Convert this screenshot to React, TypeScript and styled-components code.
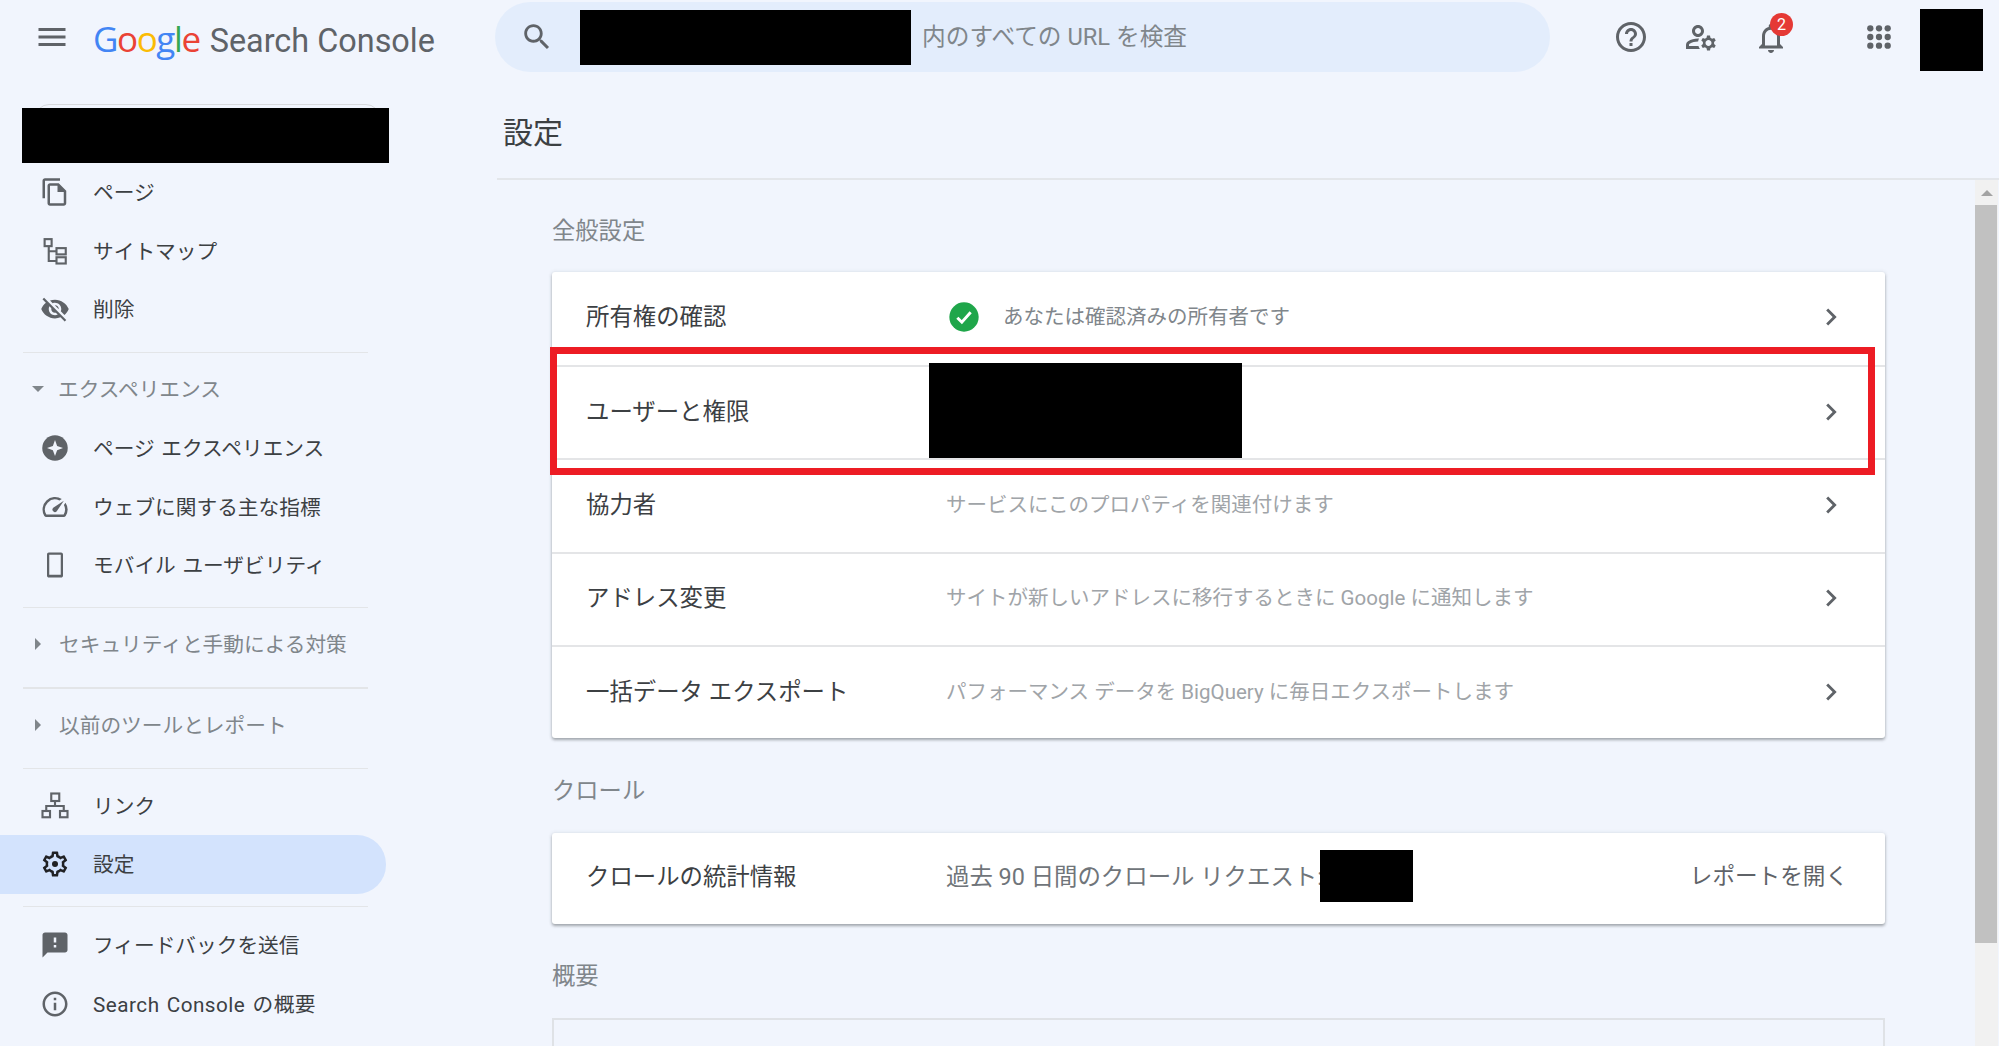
import React from 'react';
import styled, { createGlobalStyle } from 'styled-components';

const Global = createGlobalStyle`
  html, body { margin: 0; padding: 0; height: 100%; overflow: hidden; background: #f1f5fd; }
  body { font-family: Roboto, "Noto Sans CJK JP", sans-serif; color: #3c4043; }
  * { box-sizing: border-box; }
`;

const Page = styled.div`
  width: 1999px; height: 1046px; overflow: hidden; display: flex; flex-direction: column; background: #f1f5fd;
`;
const Header = styled.header`
  height: 76px; flex: none; display: flex; align-items: flex-start; padding-left: 34px;
`;
const MenuButton = styled.div`
  width: 36px; height: 36px; margin-top: 19px; color: #5f6368;
`;
const Logo = styled.div`
  width: 402px; margin-left: 23px; margin-top: 18px; display: flex; align-items: baseline; gap: 10px; font-size: 32.4px; line-height: 42px; white-space: nowrap; color: #5f6368;
`;
const GoogleWord = styled.span`
  font-family: "Open Sans", sans-serif; font-size: 35px; letter-spacing: -1.4px;
`;
const Letter = styled.span<{ $c: string }>`
  color: ${p => p.$c};
`;
const SearchBar = styled.div`
  width: 1055px; height: 70px; margin-top: 2px; border-radius: 35px; background: #e3edfc; display: flex; align-items: center; padding-left: 25px; color: #5f6368;
`;
const SearchText = styled.span`
  font-size: 23.7px; color: #80868b; margin-left: 11px; margin-bottom: 5px; white-space: nowrap;
`;
const SearchMask = styled.div`
  width: 331px; height: 55px; background: #000; margin-left: 26px;
`;
const Tools = styled.div`
  flex: 1; display: flex; align-items: flex-start; color: #5f6368;
`;
const ToolIcon = styled.div<{ $ml: number; $top?: number }>`
  position: relative; width: 36px; height: 36px; margin-left: ${p => p.$ml}px; margin-top: ${p => p.$top ?? 19}px;
`;
const Badge = styled.span`
  position: absolute; left: 17px; top: -7px; width: 23px; height: 23px; border-radius: 50%; background: #e53935; color: #fff; font-size: 16px; line-height: 23px; text-align: center;
`;
const Avatar = styled.div`
  width: 63px; height: 62px; background: #000; margin-left: 23px; margin-top: 9px;
`;
const Body = styled.div`
  flex: 1; min-height: 0; display: flex;
`;
const Sidebar = styled.nav`
  width: 497px; flex: none; padding-top: 28px;
`;
const PropertyWrap = styled.div`
  position: relative; height: 59px;
`;
const PropertyOutline = styled.div`
  position: absolute; left: 35px; top: 0; width: 345px; height: 40px; border: 1px solid #d8dadd; border-radius: 14px;
`;
const PropertyMask = styled.div`
  position: absolute; left: 22px; top: 4px; width: 367px; height: 55px; background: #000;
`;
const NavRow = styled.div<{ $active?: boolean; $wide?: boolean }>`
  width: 386px; height: 58.5px; display: flex; align-items: center; padding-left: 40px; gap: 23px; font-size: 20.7px; word-spacing: 1.5px; white-space: nowrap;
  letter-spacing: ${p => (p.$wide ? '.5px' : '0')};
  color: ${p => (p.$active ? '#202124' : '#5f6368')};
  border-radius: 0 29px 29px 0;
  background: ${p => (p.$active ? '#d3e3fd' : 'transparent')};
`;
const NavText = styled.span`
  color: #3c4043;
  position: relative; top: -1px;
`;
const Divider = styled.div<{ $top: number; $bottom: number }>`
  width: 345px; height: 1.5px; margin: ${p => p.$top}px 0 ${p => p.$bottom}px 23px; background: #e3e5e8;
`;
const Group = styled.div<{ $after?: number }>`
  height: 58px; margin: 6px 0 ${p => p.$after ?? 0}px; display: flex; align-items: center; padding-left: 30px; gap: 11px; font-size: 20.7px; color: #80868b; white-space: nowrap;
`;
const Caret = styled.span<{ $open?: boolean }>`
  width: 0; height: 0; flex: none;
  ${p => p.$open
    ? 'border-left: 6px solid transparent; border-right: 6px solid transparent; border-top: 6px solid #80868b; margin: 2px 3px 0 2px;'
    : 'border-top: 6px solid transparent; border-bottom: 6px solid transparent; border-left: 6px solid #80868b; margin: 2px 7px 0 5px;'}
`;
const Main = styled.main`
  flex: 1; min-width: 0; display: flex; flex-direction: column;
`;
const TitleBar = styled.div`
  height: 105px; flex: none; margin-top: -1px; padding: 36px 0 0 6px; border-bottom: 2px solid #e3e6ea; font-size: 30px; line-height: 44px; color: #3c4043;
`;
const ContentRow = styled.div`
  flex: 1; min-height: 0; display: flex;
`;
const Content = styled.div`
  width: 1478px; flex: none; overflow: hidden; padding: 0 90px 0 55px;
`;
const SectionTitle = styled.div<{ $top?: number; $bottom?: number }>`
  height: 30px; line-height: 30px; margin: ${p => p.$top ?? 36}px 0 ${p => p.$bottom ?? 27}px; font-size: 23.3px; color: #80868b;
`;
const Card = styled.div`
  position: relative; background: #fff; border-radius: 3px; box-shadow: 0 2px 3px rgba(60,64,67,.4), 0 0 4px rgba(60,64,67,.12);
`;
const Row = styled.div<{ $h?: number }>`
  position: relative; height: ${p => p.$h ?? 93.4}px; display: flex; align-items: center; padding: 0 40px 0 34px;
  & + & { border-top: 2px solid #e4e5e7; }
`;
const Label = styled.div`
  width: 360px; flex: none; margin-bottom: 6px; font-size: 23.4px; color: #3c4043; white-space: nowrap;
`;
const Desc = styled.div`
  flex: 1; margin-bottom: 6px; font-size: 20.5px; color: #a0a4a8; white-space: nowrap;
`;
const OwnerDesc = styled(Desc)`
  display: flex; align-items: center; gap: 23px; color: #80868b; margin-left: 2px; margin-bottom: 2px;
`;
const OwnerText = styled.span`
  margin-bottom: 4px;
`;
const CrawlDesc = styled(Desc)`
  display: flex; align-items: center; font-size: 23.4px; color: #70757a; margin-bottom: 7px;
`;
const CrawlMask = styled.div`
  width: 93px; height: 52px; background: #000; margin-left: -3px; margin-top: 2px;
`;
const Chevron = styled.div`
  width: 34px; height: 34px; margin-right: -3px; margin-bottom: 2px; color: #5f6368;
`;
const ReportLink = styled.div`
  font-size: 22.6px; color: #5f6368; white-space: nowrap; margin-right: -3px; margin-bottom: 7px;
`;
const UserMask = styled.div`
  position: absolute; left: 377px; top: -4px; width: 313px; height: 95px; background: #000;
`;
const Highlight = styled.div`
  position: absolute; left: -2px; top: 75px; right: 10px; height: 128px; border: 7px solid #ed1c24; pointer-events: none;
`;
const EmptyCard = styled.div`
  height: 200px; border: 2px solid #dfe2e6; background: #f1f5fd;
`;
const Scrollbar = styled.div`
  width: 23px; flex: none; background: #f1f1f1; display: flex; flex-direction: column;
`;
const ScrollArrow = styled.div`
  height: 25px; display: flex; align-items: center; justify-content: center;
  &::before { content: ''; border-left: 6px solid transparent; border-right: 6px solid transparent; border-bottom: 6px solid #a3a3a3; }
`;
const ScrollThumb = styled.div`
  height: 738px; width: 22px; background: #c1c1c1;
`;
const Svg = styled.svg<{ $size: number }>`
  width: ${p => p.$size}px; height: ${p => p.$size}px; flex: none; display: block; fill: currentColor;
`;

const Icon: React.FC<{ d?: string; size?: number; children?: React.ReactNode }> = ({ d, size = 30, children }) => (
  <Svg $size={size} viewBox="0 0 24 24">{d && <path d={d} />}{children}</Svg>
);

const P = {
  menu: 'M3 18h18v-2H3v2zm0-5h18v-2H3v2zm0-7v2h18V6H3z',
  search: 'M15.5 14h-.79l-.28-.27C15.41 12.59 16 11.11 16 9.5 16 5.91 13.09 3 9.5 3S3 5.91 3 9.5 5.91 16 9.5 16c1.61 0 3.09-.59 4.23-1.57l.27.28v.79l5 4.99L20.49 19l-4.99-5zm-6 0C7.01 14 5 11.99 5 9.5S7.01 5 9.5 5 14 7.01 14 9.5 11.99 14 9.5 14z',
  help: 'M11 18h2v-2h-2v2zm1-16C6.48 2 2 6.48 2 12s4.48 10 10 10 10-4.48 10-10S17.52 2 12 2zm0 18c-4.41 0-8-3.59-8-8s3.59-8 8-8 8 3.59 8 8-3.59 8-8 8zm0-14c-2.21 0-4 1.79-4 4h2c0-1.1.9-2 2-2s2 .9 2 2c0 2-3 1.75-3 5h2c0-2.25 3-2.5 3-5 0-2.21-1.79-4-4-4z',
  manage: 'M4 18v-.65c0-.34.16-.66.41-.81C6.1 15.53 8.03 15 10 15c.03 0 .05 0 .08.01.1-.7.3-1.37.59-1.98-.22-.02-.44-.03-.67-.03-2.42 0-4.68.67-6.61 1.82-.88.52-1.39 1.5-1.39 2.53V20h9.26c-.42-.6-.75-1.28-.97-2H4zm6-6c2.21 0 4-1.79 4-4s-1.79-4-4-4-4 1.79-4 4 1.79 4 4 4zm0-6c1.1 0 2 .9 2 2s-.9 2-2 2-2-.9-2-2 .9-2 2-2zm10.75 10c0-.22-.03-.42-.06-.63l1.14-1.01-1-1.73-1.45.49c-.32-.27-.68-.48-1.08-.63L18 11h-2l-.3 1.49c-.4.15-.76.36-1.08.63l-1.45-.49-1 1.73 1.14 1.01c-.03.21-.06.41-.06.63s.03.42.06.63l-1.14 1.01 1 1.73 1.45-.49c.32.27.68.48 1.08.63L16 21h2l.3-1.49c.4-.15.76-.36 1.08-.63l1.45.49 1-1.73-1.14-1.01c.03-.21.06-.41.06-.63zM17 18c-1.1 0-2-.9-2-2s.9-2 2-2 2 .9 2 2-.9 2-2 2z',
  bell: 'M12 22c1.1 0 2-.9 2-2h-4c0 1.1.9 2 2 2zm6-6v-5c0-3.07-1.63-5.64-4.5-6.32V4c0-.83-.67-1.5-1.5-1.5s-1.5.67-1.5 1.5v.68C7.64 5.36 6 7.92 6 11v5l-2 2v1h16v-1l-2-2zm-2 1H8v-6c0-2.48 1.51-4.5 4-4.5s4 2.02 4 4.5v6z',
  copy: 'M16 1H4c-1.1 0-2 .9-2 2v14h2V3h12V1zm-1 4H8c-1.1 0-1.99.9-1.99 2L6 21c0 1.1.89 2 1.99 2H19c1.1 0 2-.9 2-2V11l-6-6zM8 21V7h6v5h5v9H8z',
  eyeOff: 'M12 7c2.76 0 5 2.24 5 5 0 .65-.13 1.26-.36 1.83l2.92 2.92c1.51-1.26 2.7-2.89 3.43-4.75-1.73-4.39-6-7.5-11-7.5-1.4 0-2.74.25-3.98.7l2.16 2.16C10.74 7.13 11.35 7 12 7zM2 4.27l2.28 2.28.46.46C3.08 8.3 1.78 10.02 1 12c1.73 4.39 6 7.5 11 7.5 1.55 0 3.03-.3 4.38-.84l.42.42L19.73 22 21 20.73 3.27 3 2 4.27zM7.53 9.8l1.55 1.55c-.05.21-.08.43-.08.65 0 1.66 1.34 3 3 3 .22 0 .44-.03.65-.08l1.55 1.55c-.67.33-1.41.53-2.2.53-2.76 0-5-2.24-5-5 0-.79.2-1.53.53-2.2zm4.31-.78l3.15 3.15.02-.16c0-1.66-1.34-3-3-3l-.17.01z',
  speed: 'M20.38 8.57l-1.23 1.85a8 8 0 0 1-.22 7.58H5.07A8 8 0 0 1 15.58 6.85l1.85-1.23A10 10 0 0 0 3.35 19a2 2 0 0 0 1.72 1h13.85a2 2 0 0 0 1.74-1 10 10 0 0 0-.27-10.44zM10.59 15.41a2 2 0 0 0 2.83 0l5.66-8.49-8.49 5.66a2 2 0 0 0 0 2.83z',
  phone: 'M16.9 2H7.1C6.2 2 5.6 2.7 5.6 3.5v17c0 .9.7 1.5 1.5 1.5h9.8c.8 0 1.5-.7 1.5-1.5v-17c0-.8-.7-1.5-1.500-1.500zM16.6 19.8H7.4V3.8h9.2z',
  gear: 'M19.43 12.98c.04-.32.07-.64.07-.98 0-.34-.03-.66-.07-.98l2.11-1.65c.19-.15.24-.42.12-.64l-2-3.46c-.09-.16-.26-.25-.44-.25-.06 0-.12.01-.17.03l-2.49 1c-.52-.4-1.08-.73-1.69-.98l-.38-2.65C14.46 2.18 14.25 2 14 2h-4c-.25 0-.46.18-.49.42l-.38 2.65c-.61.25-1.17.59-1.69.98l-2.49-1c-.06-.02-.12-.03-.18-.03-.17 0-.34.09-.43.25l-2 3.46c-.13.22-.07.49.12.64l2.11 1.65c-.04.32-.07.65-.07.98 0 .33.03.66.07.98l-2.11 1.65c-.19.15-.24.42-.12.64l2 3.46c.09.16.26.25.44.25.06 0 .12-.01.17-.03l2.49-1c.52.4 1.08.73 1.69.98l.38 2.65c.03.24.24.42.49.42h4c.25 0 .46-.18.49-.42l.38-2.65c.61-.25 1.17-.59 1.69-.98l2.49 1c.06.02.12.03.18.03.17 0 .34-.09.43-.25l2-3.46c.12-.22.07-.49-.12-.64l-2.11-1.65zm-1.98-1.71c.04.31.05.52.05.73 0 .21-.02.43-.05.73l-.14 1.13.89.7 1.08.84-.7 1.21-1.27-.51-1.04-.42-.9.68c-.43.32-.84.56-1.25.73l-1.06.43-.16 1.13-.2 1.35h-1.4l-.19-1.35-.16-1.13-1.06-.43c-.43-.18-.83-.41-1.23-.71l-.91-.7-1.06.43-1.27.51-.7-1.21 1.08-.84.89-.7-.14-1.13c-.03-.31-.05-.54-.05-.74s.02-.43.05-.73l.14-1.13-.89-.7-1.08-.84.7-1.21 1.27.51 1.04.42.9-.68c.43-.32.84-.56 1.25-.73l1.06-.43.16-1.13.2-1.35h1.39l.19 1.35.16 1.13 1.06.43c.43.18.83.41 1.23.71l.91.7 1.06-.43 1.27-.51.7 1.21-1.07.85-.89.7.14 1.13z',
  feedback: 'M20 2H4c-1.1 0-1.99.9-1.99 2L2 22l4-4h14c1.1 0 2-.9 2-2V4c0-1.1-.9-2-2-2zm-7 12h-2v-2h2v2zm0-4h-2V6h2v4z',
  info: 'M11 7h2v2h-2zm0 4h2v6h-2zm1-9C6.48 2 2 6.48 2 12s4.48 10 10 10 10-4.48 10-10S17.52 2 12 2zm0 18c-4.41 0-8-3.59-8-8s3.59-8 8-8 8 3.59 8 8-3.59 8-8 8z',
  chevron: 'M10 6L8.59 7.41 13.17 12l-4.58 4.59L10 18l6-6z',
};

const SitemapIcon = () => (
  <Icon>
    <g fill="none" stroke="currentColor" strokeWidth="1.7">
      <rect x="3.7" y="2.5" width="5.6" height="5.6" />
      <rect x="13.2" y="9.7" width="7.4" height="5" />
      <rect x="13.2" y="17" width="7.4" height="5" />
      <path d="M7 8v12h6M7 12.2h6" />
    </g>
  </Icon>
);
const LanIcon = () => (
  <Icon>
    <g fill="none" stroke="currentColor" strokeWidth="1.7">
      <rect x="9" y="2" width="6.4" height="6" />
      <rect x="2" y="16" width="6" height="5" />
      <rect x="16" y="16" width="6" height="5" />
      <path d="M12 8v4M5 16v-4h14v4" />
    </g>
  </Icon>
);
const ExperienceIcon = () => (
  <Icon>
    <circle cx="12" cy="12" r="10.2" />
    <path fill="#f1f5fd" d="M12 5.6l1.7 4.7 4.7 1.7-4.7 1.7-1.7 4.7-1.7-4.7L5.6 12l4.7-1.7z" />
  </Icon>
);
const GearIcon = () => (
  <Icon d={P.gear}><circle cx="12" cy="12" r="2.4" /></Icon>
);
const AppsIcon = () => (
  <Icon size={36}>
    {[6.2, 12, 17.8].flatMap(y => [6.2, 12, 17.8].map(x => <circle key={`${x}-${y}`} cx={x} cy={y} r="2.1" />))}
  </Icon>
);
const CheckIcon = () => (
  <Icon size={32}>
    <circle cx="12" cy="12" r="11" fill="#1fa64a" />
    <path fill="none" stroke="#fff" strokeWidth="2.2" d="M7 12.5l3.4 3.4L17 8.5" />
  </Icon>
);

const NavItem: React.FC<{ icon: React.ReactNode; text: string; active?: boolean; wide?: boolean }> = ({ icon, text, active, wide }) => (
  <NavRow $active={active} $wide={wide}>{icon}<NavText>{text}</NavText></NavRow>
);

const googleLetters: [string, string][] = [['G', '#4285f4'], ['o', '#ea4335'], ['o', '#fbbc05'], ['g', '#4285f4'], ['l', '#34a853'], ['e', '#ea4335']];

const ChevronRight = () => <Chevron><Icon d={P.chevron} size={34} /></Chevron>;

export default function App() {
  return (
    <Page>
      <Global />
      <Header>
        <MenuButton><Icon d={P.menu} size={36} /></MenuButton>
        <Logo>
          <GoogleWord>{googleLetters.map(([l, c], i) => <Letter key={i} $c={c}>{l}</Letter>)}</GoogleWord>
          <span>Search Console</span>
        </Logo>
        <SearchBar>
          <Icon d={P.search} size={34} />
          <SearchMask />
          <SearchText>内のすべての URL を検査</SearchText>
        </SearchBar>
        <Tools>
          <ToolIcon $ml={63}><Icon d={P.help} size={36} /></ToolIcon>
          <ToolIcon $ml={34}><Icon d={P.manage} size={36} /></ToolIcon>
          <ToolIcon $ml={34} $top={20}><Icon d={P.bell} size={36} /><Badge>2</Badge></ToolIcon>
          <ToolIcon $ml={72}><AppsIcon /></ToolIcon>
          <Avatar />
        </Tools>
      </Header>
      <Body>
        <Sidebar>
          <PropertyWrap><PropertyOutline /><PropertyMask /></PropertyWrap>
          <NavItem icon={<Icon d={P.copy} />} text="ページ" />
          <NavItem icon={<SitemapIcon />} text="サイトマップ" />
          <NavItem icon={<Icon d={P.eyeOff} />} text="削除" />
          <Divider $top={13} $bottom={0} />
          <Group $after={2}><Caret $open />エクスペリエンス</Group>
          <NavItem icon={<ExperienceIcon />} text="ページ エクスペリエンス" />
          <NavItem icon={<Icon d={P.speed} />} text="ウェブに関する主な指標" />
          <NavItem icon={<Icon d={P.phone} />} text="モバイル ユーザビリティ" />
          <Divider $top={12} $bottom={0} />
          <Group><Caret />セキュリティと手動による対策</Group>
          <Divider $top={15} $bottom={0} />
          <Group><Caret />以前のツールとレポート</Group>
          <Divider $top={15} $bottom={7.5} />
          <NavItem icon={<LanIcon />} text="リンク" />
          <NavItem icon={<GearIcon />} text="設定" active />
          <Divider $top={12} $bottom={9} />
          <NavItem icon={<Icon d={P.feedback} />} text="フィードバックを送信" />
          <NavItem icon={<Icon d={P.info} />} text="Search Console の概要" wide />
        </Sidebar>
        <Main>
          <TitleBar>設定</TitleBar>
          <ContentRow>
            <Content>
              <SectionTitle $bottom={25.5}>全般設定</SectionTitle>
              <Card>
                <Row>
                  <Label>所有権の確認</Label>
                  <OwnerDesc><CheckIcon /><OwnerText>あなたは確認済みの所有者です</OwnerText></OwnerDesc>
                  <ChevronRight />
                </Row>
                <Row>
                  <Label>ユーザーと権限</Label>
                  <UserMask />
                  <Desc />
                  <ChevronRight />
                </Row>
                <Row>
                  <Label>協力者</Label>
                  <Desc>サービスにこのプロパティを関連付けます</Desc>
                  <ChevronRight />
                </Row>
                <Row>
                  <Label>アドレス変更</Label>
                  <Desc>サイトが新しいアドレスに移行するときに Google に通知します</Desc>
                  <ChevronRight />
                </Row>
                <Row>
                  <Label>一括データ エクスポート</Label>
                  <Desc>パフォーマンス データを BigQuery に毎日エクスポートします</Desc>
                  <ChevronRight />
                </Row>
                <Highlight />
              </Card>
              <SectionTitle $top={37.5}>クロール</SectionTitle>
              <Card>
                <Row $h={91}>
                  <Label>クロールの統計情報</Label>
                  <CrawlDesc>過去 90 日間のクロール リクエスト:<CrawlMask /></CrawlDesc>
                  <ReportLink>レポートを開く</ReportLink>
                </Row>
              </Card>
              <SectionTitle $top={37}>概要</SectionTitle>
              <EmptyCard />
            </Content>
            <Scrollbar>
              <ScrollArrow />
              <ScrollThumb />
            </Scrollbar>
          </ContentRow>
        </Main>
      </Body>
    </Page>
  );
}
